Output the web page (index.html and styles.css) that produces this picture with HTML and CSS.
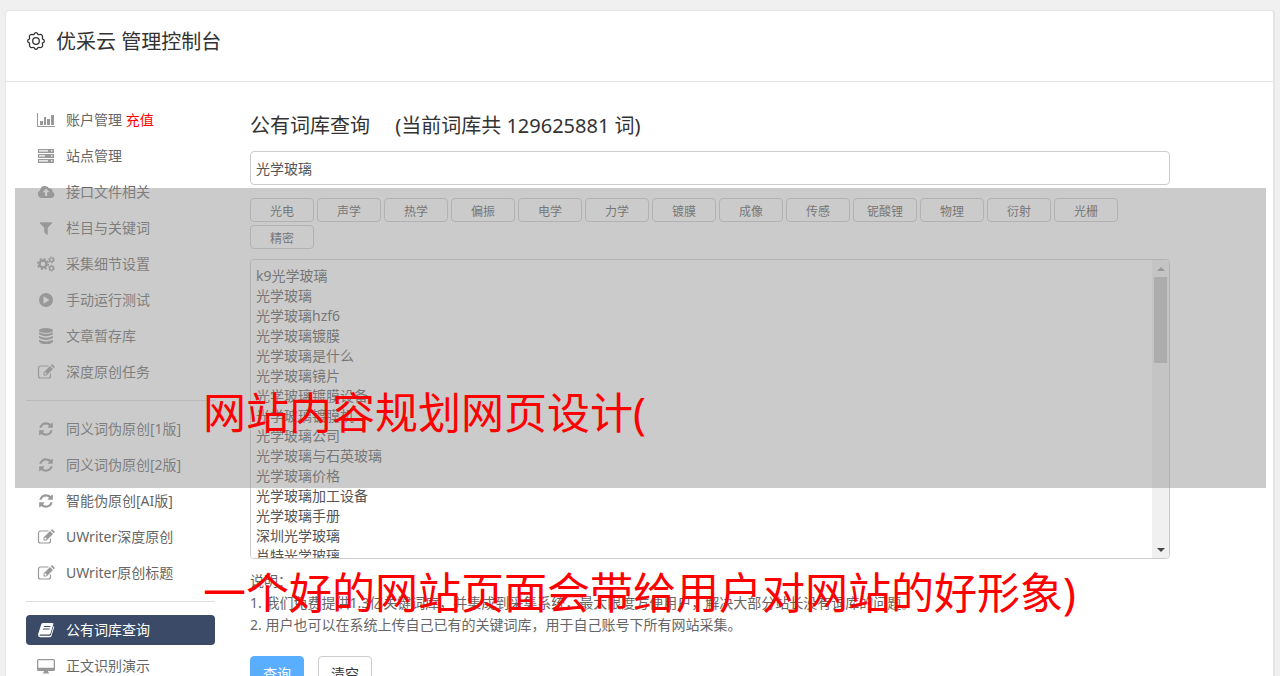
FILE: index.html
```html
<!DOCTYPE html>
<html lang="zh-CN">
<head>
    <meta charset="UTF-8">
    <meta name="viewport" content="width=device-width, initial-scale=1.0">
    <title>优采云 管理控制台</title>
    <link rel="stylesheet" href="styles.css">
</head>
<body>

    <!-- Icons -->
    <svg class="sprite" aria-hidden="true">
        <symbol id="i-chart" viewBox="0 0 20 16">
            <path d="M1.5 1v13.5H19" fill="none" stroke="currentColor"/>
            <path d="M4 9h3v4H4zM8 5h2v8H8zM11 7h3v6h-3zM15 3h3v10h-3z"/>
        </symbol>
        <symbol id="i-server" viewBox="0 0 20 16">
            <path fill-rule="evenodd" d="M2 1h16v4H2zM3 2.3h9v1.2H3zM15 2.3h1.5v1.2H15zM2 6h16v4H2zM3 7.3h6v1.2H3zM15 7.3h1.5v1.2H15zM2 11h16v4H2zM3 12.3h9v1.2H3zM15 12.3h1.5v1.2H15z"/>
        </symbol>
        <symbol id="i-upload" viewBox="0 0 20 16">
            <path fill-rule="evenodd" d="M5.500 14a4 4 0 0 1-1.500-7.500A5 5 0 0 1 13.300 4.500a2.600 2.600 0 0 1 3.200 3.200A3.300 3.300 0 0 1 15.500 14zM10 4.500L6.500 8.200H9V12h2.200V8.200h2.500z"/>
        </symbol>
        <symbol id="i-filter" viewBox="0 0 1792 1792">
            <path d="M1595 295q17 41-14 70l-493 493v742q0 42-39 59-13 5-25 5-27 0-45-19l-256-256q-19-19-19-45v-486l-493-493q-31-29-14-70 17-39 59-39h1280q42 0 59 39z"/>
        </symbol>
        <symbol id="i-cogs" viewBox="0 0 20 16">
            <circle cx="7" cy="8" r="3.500" fill="none" stroke="currentColor" stroke-width="2.500"/>
            <circle cx="7" cy="8" r="5.300" fill="none" stroke="currentColor" stroke-width="1.600" stroke-dasharray="2.080 2.080"/>
            <circle cx="15.500" cy="3.800" r="1.900" fill="none" stroke="currentColor" stroke-width="1.400"/>
            <circle cx="15.500" cy="3.800" r="2.900" fill="none" stroke="currentColor" stroke-dasharray="1.510 1.510"/>
            <circle cx="15.500" cy="12.200" r="1.900" fill="none" stroke="currentColor" stroke-width="1.400"/>
            <circle cx="15.500" cy="12.200" r="2.900" fill="none" stroke="currentColor" stroke-dasharray="1.510 1.510"/>
        </symbol>
        <symbol id="i-play" viewBox="0 0 20 16">
            <path fill-rule="evenodd" d="M10 1a7 7 0 1 0 0 14a7 7 0 1 0 0-14zM7.500 4.300v7.400l6-3.700z"/>
        </symbol>
        <symbol id="i-database" viewBox="0 0 20 16">
            <ellipse cx="10" cy="2.500" rx="7" ry="2.500"/>
            <path d="M3 4.300q7 3.600 14 0v1.900q-7 4.300-14 0zM3 8q7 3.600 14 0v1.900q-7 4.300-14 0zM3 11.700q7 3.600 14 0v1.700q-1 2.500-7 2.600-6-.1-7-2.600z"/>
        </symbol>
        <symbol id="i-edit" viewBox="0 0 20 16">
            <path d="M12.500 2H4.500a2 2 0 0 0-2 2v8a2 2 0 0 0 2 2h8a2 2 0 0 0 2-2V9.500" fill="none" stroke="currentColor" stroke-width="1.200"/>
            <path fill-rule="evenodd" d="M7.500 8.500L14 2l3 3-6.500 6.500h-3zM8.500 9v1.500H10l.8-.8L9.300 8.200zM14.700 1.300l.8-.8q.5-.5 1 0l2 2q.5.5 0 1l-.8.800z"/>
        </symbol>
        <symbol id="i-refresh" viewBox="0 0 1792 1792">
            <path d="M1639 1056q0 5-1 7-64 268-268 434.500t-478 166.500q-146 0-282.500-55t-243.500-157l-129 129q-19 19-45 19t-45-19-19-45v-448q0-26 19-45t45-19h448q26 0 45 19t19 45-19 45l-137 137q71 66 161 102t187 36q134 0 250-65t186-179q11-17 53-117 8-23 30-23h192q13 0 22.500 9.500t9.500 22.500zm25-800v448q0 26-19 45t-45 19h-448q-26 0-45-19t-19-45 19-45l138-138q-148-137-349-137-134 0-250 65t-186 179q-11 17-53 117-8 23-30 23h-199q-13 0-22.500-9.500t-9.500-22.500v-7q65-268 270-434.500t480-166.500q146 0 284 55.500t245 156.500l130-129q19-19 45-19t45 19 19 45z"/>
        </symbol>
        <symbol id="i-book" viewBox="0 0 20 16">
            <path fill-rule="evenodd" d="M7 1h9.500q1.200 0 .8 1.300L14.500 11.500q-.3 1-1.400 1H4.300q-1 0-.7.700t1 .6h9.200q.8 0 1.100-.8L17.500 4q.9.500.6 1.400L15.500 14q-.4 1.200-1.600 1.200H4.200Q2 15 2 12.500L5 3Q5.500 1 7 1zM8 4l-.3 1h6.500l.3-1zM7.200 6.500l-.3 1h6.500l.3-1z"/>
        </symbol>
        <symbol id="i-desktop" viewBox="0 0 20 16">
            <path fill-rule="evenodd" d="M2.500 1h15Q19 1 19 2.500v9q0 1.500-1.500 1.500H12q0 1 1 2v.5H7V15q1-1 1-2H2.500Q1 13 1 11.500v-9Q1 1 2.500 1zM2.300 2.300v7.500h15.400V2.300z"/>
        </symbol>
        <symbol id="i-gear" viewBox="0 0 20 20">
            <path d="M8.200 3.200Q8.700 1.600 10 1.600T11.800 3.200Q12.500 3.900 13.500 3.500Q15 2.900 15.900 4.100T16.500 6.500Q16.100 7.500 16.800 8.200Q18.400 8.700 18.400 10T16.800 11.800Q16.100 12.500 16.500 13.500Q17.100 15 15.900 15.900T13.500 16.500Q12.500 16.100 11.800 16.800Q11.300 18.400 10 18.400T8.200 16.800Q7.500 16.100 6.500 16.500Q5 17.100 4.100 15.900T3.500 13.500Q3.900 12.500 3.200 11.800Q1.600 11.300 1.600 10T3.200 8.200Q3.900 7.500 3.500 6.500Q2.900 5 4.100 4.100T6.500 3.500Q7.500 3.900 8.200 3.200z" fill="none" stroke="currentColor" stroke-width="1.300"/>
            <circle cx="10" cy="10" r="3.300" fill="none" stroke="currentColor" stroke-width="1.300"/>
        </symbol>
    </svg>

    <div class="page">
        <div class="panel">
            <header class="panel-header">
                <svg class="gear"><use href="#i-gear"/></svg>
                <h1>优采云 管理控制台</h1>
            </header>

            <div class="panel-body">
                <!-- Menu -->
                <nav class="sidebar">
                    <a class="item" href="#"><svg class="icon"><use href="#i-chart"/></svg><span>账户管理 <span class="recharge">充值</span></span></a>
                    <a class="item" href="#"><svg class="icon"><use href="#i-server"/></svg>站点管理</a>
                    <a class="item" href="#"><svg class="icon"><use href="#i-upload"/></svg>接口文件相关</a>
                    <a class="item" href="#"><svg class="icon"><use href="#i-filter"/></svg>栏目与关键词</a>
                    <a class="item" href="#"><svg class="icon"><use href="#i-cogs"/></svg>采集细节设置</a>
                    <a class="item" href="#"><svg class="icon"><use href="#i-play"/></svg>手动运行测试</a>
                    <a class="item" href="#"><svg class="icon"><use href="#i-database"/></svg>文章暂存库</a>
                    <a class="item" href="#"><svg class="icon"><use href="#i-edit"/></svg>深度原创任务</a>
                    <hr>
                    <a class="item" href="#"><svg class="icon"><use href="#i-refresh"/></svg>同义词伪原创[1版]</a>
                    <a class="item" href="#"><svg class="icon"><use href="#i-refresh"/></svg>同义词伪原创[2版]</a>
                    <a class="item" href="#"><svg class="icon"><use href="#i-refresh"/></svg>智能伪原创[AI版]</a>
                    <a class="item" href="#"><svg class="icon"><use href="#i-edit"/></svg>UWriter深度原创</a>
                    <a class="item" href="#"><svg class="icon"><use href="#i-edit"/></svg>UWriter原创标题</a>
                    <hr>
                    <a class="item active" href="#"><svg class="icon"><use href="#i-book"/></svg>公有词库查询</a>
                    <a class="item" href="#"><svg class="icon"><use href="#i-desktop"/></svg>正文识别演示</a>
                </nav>

                <!-- Keyword search -->
                <main class="content">
                    <h2><label for="keyword">公有词库查询</label> <span class="total">(当前词库共 129625881 词)</span></h2>
                    <input class="keyword" type="text" id="keyword" value="光学玻璃">

                    <div class="tags">
                        <button class="tag">光电</button>
                        <button class="tag">声学</button>
                        <button class="tag">热学</button>
                        <button class="tag">偏振</button>
                        <button class="tag">电学</button>
                        <button class="tag">力学</button>
                        <button class="tag">镀膜</button>
                        <button class="tag">成像</button>
                        <button class="tag">传感</button>
                        <button class="tag">铌酸锂</button>
                        <button class="tag">物理</button>
                        <button class="tag">衍射</button>
                        <button class="tag">光栅</button>
                        <button class="tag">精密</button>
                    </div>

                    <div class="result-box">
                        <textarea class="result" aria-label="查询结果">k9光学玻璃
光学玻璃
光学玻璃hzf6
光学玻璃镀膜
光学玻璃是什么
光学玻璃镜片
光学玻璃镀膜设备
光学玻璃镀膜机
光学玻璃公司
光学玻璃与石英玻璃
光学玻璃价格
光学玻璃加工设备
光学玻璃手册
深圳光学玻璃
肖特光学玻璃</textarea>
                        <div class="scrollbar">
                            <span class="arrow up"></span>
                            <span class="thumb"></span>
                            <span class="arrow down"></span>
                        </div>
                    </div>

                    <div class="notes">
                        <p>说明：</p>
                        <p>1. 我们免费提供1.3亿关键词库，并集成到采集系统，最大限度方便用户，解决大部分站长没有词库的问题。</p>
                        <p>2. 用户也可以在系统上传自己已有的关键词库，用于自己账号下所有网站采集。</p>
                    </div>

                    <div class="actions">
                        <button class="btn btn-primary">查询</button>
                        <button class="btn">清空</button>
                    </div>
                </main>
            </div>
        </div>

        <!-- Caption over the page -->
        <div class="shade"></div>
        <div class="caption">
            <p>网站内容规划网页设计(</p>
            <p>一个好的网站页面会带给用户对网站的好形象)</p>
        </div>
    </div>

</body>
</html>
```
FILE: styles.css
```css
* {
    box-sizing: border-box;
}

body {
    margin: 0;
    background-color: #f0f0f0;
    color: #666;
    font-family: "Noto Sans", "Noto Sans CJK SC", sans-serif;
    font-size: 14px;
    line-height: 20px;
}

h1, h2, p {
    margin: 0;
    font-weight: normal;
}

button, input, textarea {
    font-family: inherit;
    margin: 0;
}

.sprite {
    position: absolute;
    width: 0;
    height: 0;
}

.page {
    position: relative;
    height: 100vh;
    overflow: hidden;
    padding: 10px 5px 0;
}

.panel {
    background-color: #fff;
    border: 1px solid #e5e5e5;
    border-right-width: 2px;
    border-radius: 4px;
}

.panel-header {
    display: flex;
    align-items: center;
    gap: 10px;
    height: 71px;
    padding: 0 20px 8px;
    border-bottom: 1px solid #e5e5e5;
    color: #333;
}

.panel-header h1 {
    font-size: 20px;
    line-height: 28px;
}

.gear {
    width: 20px;
    height: 20px;
    margin-bottom: 2px;
}

.panel-body {
    display: flex;
    align-items: flex-start;
    gap: 35px;
    padding: 23px 103px 40px 20px;
}

/* Menu */
.sidebar {
    display: flex;
    flex-direction: column;
    flex: none;
    gap: 6px;
    width: 189px;
}

.sidebar hr {
    width: 100%;
    margin: 7px 0;
    border: 0;
    border-top: 1px solid #ddd;
}

.item {
    display: flex;
    align-items: center;
    gap: 10px;
    height: 30px;
    padding: 0 10px;
    border-radius: 4px;
    color: #666;
    text-decoration: none;
}

.icon {
    width: 20px;
    height: 16px;
    fill: currentColor;
    color: #999;
}

.recharge {
    color: #f00;
}

.item.active {
    background-color: #3b4a66;
    color: #fff;
}

.item.active .icon {
    color: #fff;
}

/* Keyword search */
.content {
    flex: 1;
    min-width: 0;
    padding-top: 7px;
}

.content h2 {
    margin-bottom: 11px;
    color: #333;
    font-size: 20px;
    line-height: 28px;
}

.total {
    margin-left: 20px;
}

.keyword {
    display: block;
    width: 100%;
    height: 34px;
    padding: 0 5px;
    border: 1px solid #ccc;
    border-radius: 4px;
    color: #555;
    font-size: 14px;
}

.tags {
    display: flex;
    flex-wrap: wrap;
    gap: 3px;
    margin: 13px 0 10px;
}

.tag {
    width: 64px;
    height: 24px;
    padding: 2px 0 0;
    border: 1px solid #ccc;
    border-radius: 4px;
    background-color: #fff;
    color: #555;
    font-size: 12px;
}

.result-box {
    display: flex;
    height: 300px;
    border: 1px solid #ccc;
    border-radius: 4px;
    overflow: hidden;
}

.result {
    flex: 1;
    padding: 6px 5px;
    border: 0;
    outline: 0;
    resize: none;
    overflow: hidden;
    background-color: #fff;
    color: #555;
    font-size: 14px;
    line-height: 20px;
}

.scrollbar {
    display: flex;
    flex-direction: column;
    align-items: center;
    width: 17px;
    background-color: #f0f0f0;
}

.thumb {
    width: 13px;
    height: 86px;
    background-color: #c0c0c0;
}

.arrow {
    display: flex;
    align-items: center;
    height: 17px;
}

.arrow::before {
    content: "";
    border: 4px solid transparent;
}

.arrow.up::before {
    border-top: 0;
    border-bottom-color: #999;
}

.arrow.down {
    margin-top: auto;
}

.arrow.down::before {
    border-bottom: 0;
    border-top-color: #444;
}

.notes {
    margin: 11px 0 20px;
    line-height: 22px;
}

.actions {
    display: flex;
    gap: 14px;
}

.btn {
    width: 54px;
    height: 34px;
    padding: 0;
    border: 1px solid #ccc;
    border-radius: 4px;
    background-color: #fff;
    color: #333;
    font-size: 14px;
}

.btn-primary {
    border-color: #5aaeff;
    background-color: #5aaeff;
    color: #fff;
}

/* Caption over the page */
.shade {
    position: absolute;
    top: 188px;
    left: 15px;
    right: 14px;
    height: 300px;
    background-color: rgba(152, 152, 152, 0.5);
    pointer-events: none;
}

.caption {
    position: absolute;
    top: 323px;
    left: 203px;
    color: #f00;
    font-size: 43px;
    line-height: 180px;
    white-space: nowrap;
    pointer-events: none;
}
```
